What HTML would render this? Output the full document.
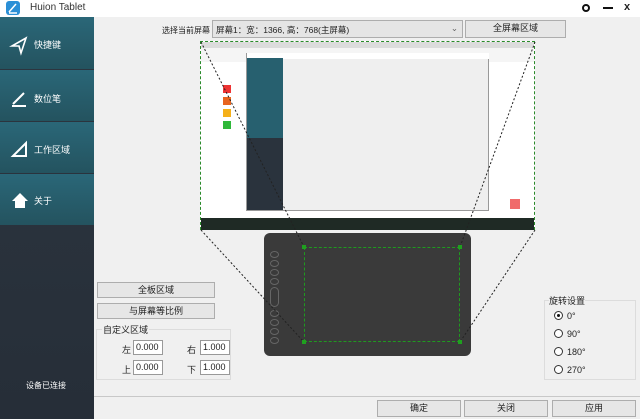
<!DOCTYPE html>
<html><head><meta charset="utf-8"><style>
*{margin:0;padding:0;box-sizing:border-box}
body{width:640px;height:419px;overflow:hidden;background:#f0f0f0;font-family:"Liberation Sans","Noto Sans CJK SC",sans-serif;font-size:9px;color:#222;position:relative}
.a{position:absolute}
.btn{position:absolute;background:#e6e6e6;border:1px solid #adadad;text-align:center;font-size:9px;line-height:15px}
.side{position:absolute;left:0;width:94px;background:linear-gradient(#2a6778,#24535f);color:#fff;font-size:9px}
.side span{position:absolute;left:34px}
.inp{position:absolute;background:#fff;border:1px solid #999;width:30px;height:15px;font-size:9px;line-height:13px;padding-left:2px}
.grp{position:absolute;border:1px solid #dcdcdc}
.rad{position:absolute;width:9px;height:9px;border:1px solid #333;border-radius:50%;background:#fff}
.ov{position:absolute;left:270px;width:9px;height:7px;border:1px solid #666;border-radius:50%}
</style></head><body>
<div class="a" style="left:0;top:0;width:640px;height:17px;background:#fff"></div>
<div class="a" style="left:6px;top:1px;width:14px;height:14px;background:#2b8fd6;border-radius:3px"></div>
<svg class="a" style="left:6px;top:1px" width="14" height="14"><path d="M3 11 L10 3 M3 12 L11 12" stroke="#fff" stroke-width="1.5"/></svg>
<div class="a" style="left:30px;top:2px;font-size:10px;color:#333">Huion Tablet</div>
<div class="a" style="left:582px;top:4px;width:8px;height:8px;border:2px solid #111;border-radius:50%"></div>
<div class="a" style="left:603px;top:7px;width:10px;height:2px;background:#111"></div>
<div class="a" style="left:624px;top:1px;font-size:11px;font-weight:bold">x</div>

<div class="a" style="left:0;top:17px;width:94px;height:402px;background:linear-gradient(#2d3640,#262e38)"></div>
<div class="side" style="top:17px;height:52px"><span style="top:21px">快捷键</span></div>
<div class="side" style="top:70px;height:51px"><span style="top:22px">数位笔</span></div>
<div class="side" style="top:122px;height:51px"><span style="top:21px">工作区域</span></div>
<div class="side" style="top:174px;height:51px"><span style="top:20px">关于</span></div>
<svg class="a" style="left:0;top:17px" width="94" height="210">
<path d="M12 29 L26 21 L21 36 L19 29 Z" fill="none" stroke="#fff" stroke-width="1.6"/>
<path d="M13 87 L24 76 M12 89 L26 89" stroke="#fff" stroke-width="2"/>
<path d="M13 139 L26 126 L26 139 Z" fill="none" stroke="#fff" stroke-width="2"/>
<path d="M12 184 L20 176 L28 184 L25 184 L25 191 L15 191 L15 184 Z" fill="#fff"/>
</svg>
<div class="a" style="left:26px;top:380px;color:#fff;font-size:8px">设备已连接</div>

<div class="a" style="left:162px;top:25px;font-size:8px">选择当前屏幕</div>
<div class="a" style="left:212px;top:20px;width:251px;height:18px;background:#e5e5e5;border:1px solid #adadad;padding:3px 0 0 3px;font-size:8.5px">屏幕1：宽：1366, 高：768(主屏幕)<span style="position:absolute;right:4px;top:2px;color:#666">⌄</span></div>
<div class="btn" style="left:465px;top:20px;width:101px;height:18px">全屏幕区域</div>

<div class="a" style="left:200px;top:41px;width:335px;height:189px;background:#fff;border:1px dashed #2a8a2a"></div>
<div class="a" style="left:201px;top:42px;width:333px;height:6px;background:#dcdcdc"></div>
<div class="a" style="left:201px;top:48px;width:333px;height:14px;background:#f5f5f5"></div>
<div class="a" style="left:246px;top:53px;width:243px;height:158px;background:#efefef;border:1px solid #999"></div>
<div class="a" style="left:247px;top:53px;width:242px;height:6px;background:#fff"></div>
<div class="a" style="left:247px;top:58px;width:36px;height:152px;background:#2a333d"></div>
<div class="a" style="left:247px;top:58px;width:36px;height:80px;background:#27606f"></div>
<div class="a" style="left:223px;top:85px;width:8px;height:8px;background:#e33"></div>
<div class="a" style="left:223px;top:97px;width:8px;height:8px;background:#e8641e"></div>
<div class="a" style="left:223px;top:109px;width:8px;height:8px;background:#f5b019"></div>
<div class="a" style="left:223px;top:121px;width:8px;height:8px;background:#2fb83a"></div>
<div class="a" style="left:510px;top:199px;width:10px;height:10px;background:#f06b6b"></div>
<div class="a" style="left:201px;top:218px;width:333px;height:12px;background:#1f2a25"></div>

<div class="a" style="left:264px;top:233px;width:207px;height:123px;background:#3a3a3a;border-radius:6px"></div>
<div class="a" style="left:304px;top:247px;width:156px;height:95px;border:1px dashed #1f9a1f"></div>
<div class="ov" style="top:251px"></div><div class="ov" style="top:260px"></div><div class="ov" style="top:269px"></div><div class="ov" style="top:278px"></div>
<div class="ov" style="top:287px;height:20px;border-radius:5px"></div>
<div class="ov" style="top:310px"></div><div class="ov" style="top:319px"></div><div class="ov" style="top:328px"></div><div class="ov" style="top:337px"></div>
<svg class="a" style="left:0;top:0" width="640" height="419">
<g stroke="#222" stroke-width="1" stroke-dasharray="2,2" fill="none">
<path d="M201 42 L304 247 M201 230 L304 342 M535 42 L460 247 M535 230 L460 342"/>
</g>
<g fill="#1fa01f"><rect x="302" y="245" width="4" height="4"/><rect x="458" y="245" width="4" height="4"/><rect x="302" y="340" width="4" height="4"/><rect x="458" y="340" width="4" height="4"/></g>
</svg>

<div class="btn" style="left:97px;top:282px;width:118px;height:16px">全板区域</div>
<div class="btn" style="left:97px;top:303px;width:118px;height:16px">与屏幕等比例</div>
<div class="grp" style="left:96px;top:329px;width:135px;height:51px"></div>
<div class="a" style="left:102px;top:323px;background:#f0f0f0;padding:0 1px">自定义区域</div>
<div class="a" style="left:122px;top:343px">左</div><div class="inp" style="left:133px;top:340px">0.000</div>
<div class="a" style="left:187px;top:343px">右</div><div class="inp" style="left:200px;top:340px">1.000</div>
<div class="a" style="left:122px;top:363px">上</div><div class="inp" style="left:133px;top:360px">0.000</div>
<div class="a" style="left:187px;top:363px">下</div><div class="inp" style="left:200px;top:360px">1.000</div>

<div class="grp" style="left:544px;top:300px;width:92px;height:80px"></div>
<div class="a" style="left:549px;top:294px;background:#f0f0f0">旋转设置</div>
<div class="rad" style="left:554px;top:311px"><div style="margin:2px;width:3px;height:3px;background:#111;border-radius:50%"></div></div><div class="a" style="left:567px;top:311px">0°</div>
<div class="rad" style="left:554px;top:329px"></div><div class="a" style="left:567px;top:329px">90°</div>
<div class="rad" style="left:554px;top:347px"></div><div class="a" style="left:567px;top:347px">180°</div>
<div class="rad" style="left:554px;top:365px"></div><div class="a" style="left:567px;top:365px">270°</div>

<div class="a" style="left:94px;top:396px;width:546px;height:1px;background:#c8c8c8"></div>
<div class="btn" style="left:377px;top:400px;width:84px;height:17px">确定</div>
<div class="btn" style="left:464px;top:400px;width:84px;height:17px">关闭</div>
<div class="btn" style="left:552px;top:400px;width:84px;height:17px">应用</div>
</body></html>
